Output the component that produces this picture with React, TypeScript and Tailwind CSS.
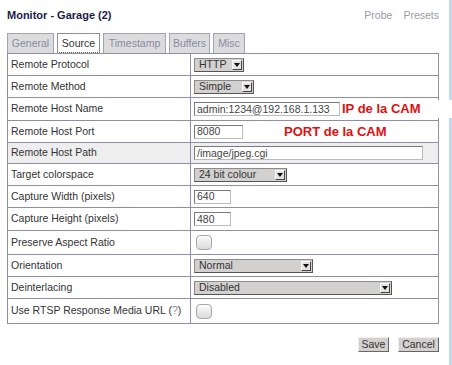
import React from "react";

const F = { fontFamily: '"Liberation Sans", Arial, sans-serif' };

function Select({ value, width }: { value: string; width: number }) {
  return (
    <div
      className="flex h-[14px] items-center justify-between border border-[#8c8c8c] border-r-[#555] border-b-[#555] bg-[#d3d0d0] pl-[4px] pr-[1px] text-[10.5px] leading-none text-[#333]"
      style={{ width }}
    >
      <span>{value}</span>
      <span className="flex h-[10px] w-[10px] items-center justify-center border border-[#fff] border-r-[#444] border-b-[#444] bg-[#e4e2e2]">
        <svg width="6" height="4" viewBox="0 0 6 4">
          <path d="M0 0H6L3 4Z" fill="#111" />
        </svg>
      </span>
    </div>
  );
}

function Input({ value, width }: { value: string; width: number }) {
  return (
    <div
      className="flex h-[14px] items-center border border-[#7a7a7a] border-r-[#bbb] border-b-[#bbb] bg-white pl-[2px] text-[10.5px] leading-none text-[#444]"
      style={{ width }}
    >
      {value}
    </div>
  );
}

function Check() {
  return (
    <div className="h-[15px] w-[16px] rounded-[4px] border border-[#a8a8a8] bg-gradient-to-b from-[#fbfbfb] to-[#dadada]" />
  );
}

function Row({
  label,
  h,
  children,
  gray,
}: {
  label: React.ReactNode;
  h: number;
  children: React.ReactNode;
  gray?: boolean;
}) {
  return (
    <div
      className={`flex border-b border-[#8e8ea6] ${gray ? "bg-[#eeeeee]" : ""}`}
      style={{ height: h }}
    >
      <div className="flex w-[183px] shrink-0 items-center border-r border-[#8e8ea6] pl-[3px] text-[10.5px] text-[#333]">
        {label}
      </div>
      <div className="flex flex-1 items-center pl-[3px]">{children}</div>
    </div>
  );
}

export default function App() {
  return (
    <div className="flex h-[365px] w-[452px] bg-white" style={F}>
      <div className="relative flex-1">
        <div className="mt-[8px] flex items-center justify-between pl-[7px] pr-[10px] leading-[14px]">
          <div className="text-[11px] font-bold text-[#1c1c4e]">Monitor - Garage (2)</div>
          <div className="flex gap-[11px] text-[10.5px] text-[#9a9aa8]">
            <span>Probe</span>
            <span>Presets</span>
          </div>
        </div>
        <div className="ml-[7px] mt-[11px] flex h-[20px] gap-[3px] text-[10.5px]">
          <div className="flex w-[47px] items-center justify-center border border-b-0 border-[#a4a4b4] bg-[#dcdcdc] text-[#8a8aa6]">General</div>
          <div className="relative flex w-[43px] items-center justify-center border border-b-0 border-[#8e8ea6] bg-white text-[#333]">
            Source
            <div className="absolute bottom-[0px] left-[1px] right-[1px] border-b border-dotted border-[#555]" />
          </div>
          <div className="flex w-[63px] items-center justify-center border border-b-0 border-[#a4a4b4] bg-[#dcdcdc] text-[#8a8aa6]">Timestamp</div>
          <div className="flex w-[41px] items-center justify-center border border-b-0 border-[#a4a4b4] bg-[#dcdcdc] text-[#8a8aa6]">Buffers</div>
          <div className="flex w-[32px] items-center justify-center border border-b-0 border-[#a4a4b4] bg-[#dcdcdc] text-[#8a8aa6]">Misc</div>
        </div>
        <div className="ml-[7px] w-[432px] border border-b-0 border-[#8e8ea6]">
          <Row label="Remote Protocol" h={22}>
            <Select value="HTTP" width={50} />
          </Row>
          <Row label="Remote Method" h={22}>
            <Select value="Simple" width={60} />
          </Row>
          <Row label="Remote Host Name" h={23}>
            <Input value="admin:1234@192.168.1.133" width={146} />
          </Row>
          <Row label="Remote Host Port" h={22}>
            <Input value="8080" width={49} />
            <span className="ml-[41px] text-[13px] font-bold text-[#dd1111]">PORT de la CAM</span>
          </Row>
          <Row label="Remote Host Path" h={21} gray>
            <Input value="/image/jpeg.cgi" width={229} />
          </Row>
          <Row label="Target colorspace" h={22}>
            <Select value="24 bit colour" width={93} />
          </Row>
          <Row label="Capture Width (pixels)" h={22}>
            <Input value="640" width={37} />
          </Row>
          <Row label="Capture Height (pixels)" h={23}>
            <Input value="480" width={37} />
          </Row>
          <Row label="Preserve Aspect Ratio" h={24}>
            <div className="pl-[2px]"><Check /></div>
          </Row>
          <Row label="Orientation" h={22}>
            <Select value="Normal" width={119} />
          </Row>
          <Row label="Deinterlacing" h={22}>
            <Select value="Disabled" width={198} />
          </Row>
          <Row
            label={
              <span>
                Use RTSP Response Media URL (<span className="text-[#8a8ab0]">?</span>)
              </span>
            }
            h={25}
          >
            <div className="pl-[2px]"><Check /></div>
          </Row>
        </div>
        <div className="mr-[10px] mt-[13px] flex justify-end gap-[9px] text-[10.5px] text-[#333]">
          <div className="flex h-[15px] w-[31px] items-center justify-center border border-[#eee] border-r-[#666] border-b-[#666] bg-[#d3d0d0]">Save</div>
          <div className="flex h-[15px] w-[41px] items-center justify-center border border-[#eee] border-r-[#666] border-b-[#666] bg-[#d3d0d0]">Cancel</div>
        </div>
        <div className="absolute left-[340px] top-[100px] flex h-[18px] w-[112px] items-center bg-white pl-[2px] text-[13px] font-bold text-[#dd1111]">
          IP de la CAM
        </div>
      </div>
      <div className="w-[3px] bg-[#c2d9f0]" />
    </div>
  );
}
